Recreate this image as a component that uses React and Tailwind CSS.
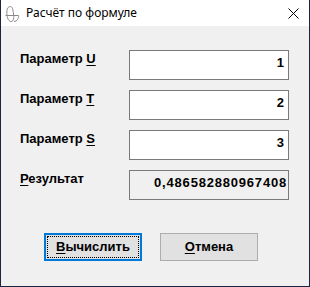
import { useState } from 'react';

const fields = [
  { label: 'Параметр ', key: 'U', value: '1' },
  { label: 'Параметр ', key: 'T', value: '2' },
  { label: 'Параметр ', key: 'S', value: '3' },
];

function AppIcon() {
  return (
    <svg width="16" height="18" viewBox="0 0 16 18" className="shrink-0">
      <g fill="none" stroke="#8a8a8a" strokeWidth="1">
        <path d="M6.5 1.5 C3 1.5 2.5 6 3 10 C3.5 14 5 16.5 7 16.5 C10 16.5 10 12 9.5 9 C9 5 8.5 1.5 6.5 1.5 Z" />
        <path d="M1.5 10.5 L14.5 10.5 C15 13 13 16.5 10 16.5" />
      </g>
    </svg>
  );
}

const bold = "font-['Liberation_Sans',sans-serif] font-bold text-[13px]";

export default function App() {
  const [values] = useState(fields);

  return (
    <div className="w-[310px] h-[287px] flex flex-col bg-[#f0f0f0] border-x border-b border-[#1d2440] text-black">
      <div className="h-[26px] bg-white flex items-center shrink-0">
        <div className="pl-[3px] pr-[6px] pt-[1px]">
          <AppIcon />
        </div>
        <span className="font-['Noto_Sans',sans-serif] text-[12px] leading-none">Расчёт по формуле</span>
        <div className="flex-1" />
        <svg width="11" height="11" viewBox="0 0 11 11" className="mr-[10px] mt-[1px]">
          <path d="M0.5 0.5 L10.5 10.5 M10.5 0.5 L0.5 10.5" stroke="#000" strokeWidth="1" />
        </svg>
      </div>

      <div className="flex flex-col gap-[10px] pt-[24px] pl-[19px]">
        {values.map((f) => (
          <div key={f.key} className="flex items-start">
            <div className={`w-[109px] pt-[1px] leading-[16px] ${bold}`}>
              {f.label}
              <span className="underline underline-offset-2">{f.key}</span>
            </div>
            <div className={`w-[160px] h-[30px] bg-white border border-[#7a7a7a] text-right pr-[4px] pt-[4px] leading-[16px] ${bold}`}>
              {f.value}
            </div>
          </div>
        ))}
        <div className="flex items-start">
          <div className={`w-[109px] pt-[1px] leading-[16px] ${bold}`}>
            <span className="underline underline-offset-2">Р</span>езультат
          </div>
          <div className={`w-[160px] h-[30px] bg-[#f0f0f0] border border-[#7a7a7a] text-right pr-[1px] pt-[4px] leading-[16px] tracking-[0.8px] ${bold}`}>
            0,486582880967408
          </div>
        </div>
      </div>

      <div className="flex gap-[18px] pl-[43px] pt-[33px]">
        <button className="w-[98px] h-[28px] border-2 border-[#0078d7] bg-[#e1e1e1] p-[1px]">
          <div className={`w-full h-full border border-dotted border-black flex items-center justify-center ${bold}`}>
            <span><span className="underline underline-offset-2">В</span>ычислить</span>
          </div>
        </button>
        <button className={`w-[98px] h-[28px] border border-[#adadad] bg-[#e1e1e1] flex items-center justify-center ${bold}`}>
          <span><span className="underline underline-offset-2">О</span>тмена</span>
        </button>
      </div>
    </div>
  );
}
